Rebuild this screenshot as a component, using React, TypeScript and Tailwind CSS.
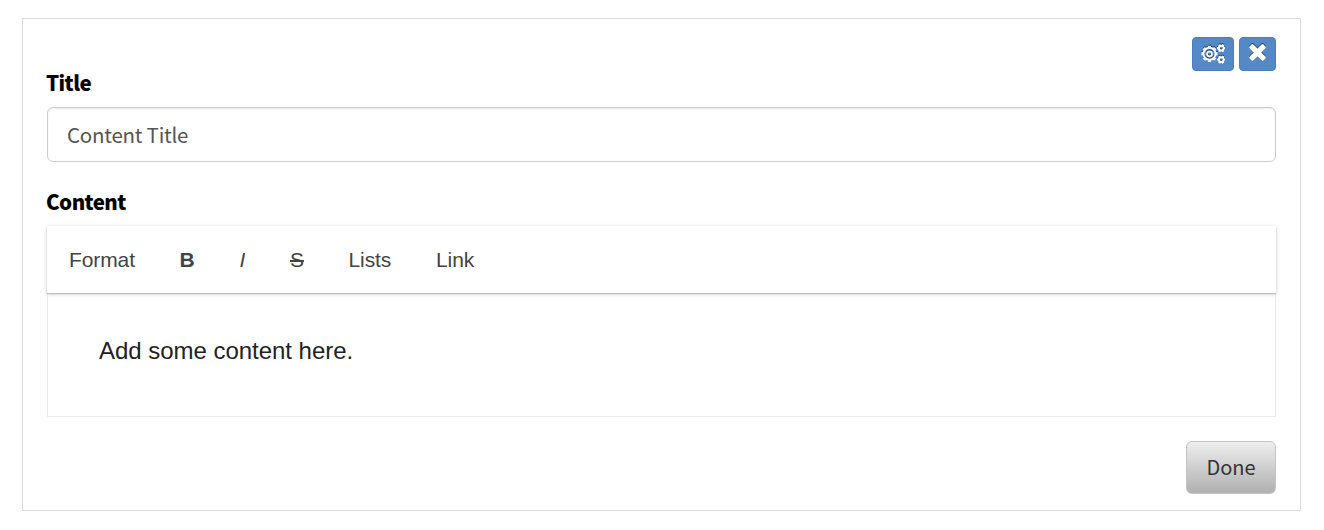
import React from "react";

type IconButtonProps = {
  label: string;
  className: string;
  children: React.ReactNode;
};

const CogsIcon = () => (
  <svg
    viewBox="0 0 24 22"
    fill="none"
    stroke="white"
    className="w-6 h-[22px] drop-shadow-[0_-1px_0_#1d3e63]"
  >
    {/* large gear */}
    <circle cx="8.5" cy="10.8" r="6" strokeWidth="2" />
    <circle
      cx="8.5"
      cy="10.8"
      r="7.2"
      strokeWidth="1.9"
      pathLength="16"
      strokeDasharray="1.1 0.9"
      strokeDashoffset="0.55"
    />
    <circle cx="8.5" cy="10.8" r="2.5" strokeWidth="1.7" />
    {/* small gears */}
    {[5.1, 16.6].map((cy) => (
      <g key={cy}>
        <circle cx="20.2" cy={cy} r="2.4" strokeWidth="2" />
        <circle
          cx="20.2"
          cy={cy}
          r="3.5"
          strokeWidth="1.4"
          pathLength="12"
          strokeDasharray="1.1 0.9"
          strokeDashoffset="0.55"
        />
      </g>
    ))}
  </svg>
);

const CloseIcon = () => (
  <svg
    viewBox="0 0 1792 1792"
    className="w-[25px] h-[25px] mb-1.5 mr-px shrink-0 fill-white drop-shadow-[0_-1px_0_#1d3e63]"
  >
    <path d="M1490 1322q0 40-28 68l-136 136q-28 28-68 28t-68-28l-294-294-294 294q-28 28-68 28t-68-28l-136-136q-28-28-28-68t28-68l294-294-294-294q-28-28-28-68t28-68l136-136q28-28 68-28t68 28l294 294 294-294q28-28 68-28t68 28l136 136q28 28 28 68t-28 68l-294 294 294 294q28 28 28 68z" />
  </svg>
);

const IconButton: React.FC<IconButtonProps> = ({
  label,
  className,
  children,
}) => (
  <button
    type="button"
    aria-label={label}
    className={`flex items-center justify-center h-[34px] rounded border border-[#4a7ebb] bg-[#5588c7] ${className}`}
  >
    {children}
  </button>
);

const tools = [
  { label: "Format", className: "w-[110.500px]" },
  { label: "B", className: "w-[60px] font-bold" },
  { label: "I", className: "w-[50.500px] italic" },
  { label: "S", className: "w-[58.500px] line-through decoration-2" },
  { label: "Lists", className: "w-[87.500px]" },
  { label: "Link", className: "" },
];

const App: React.FC = () => (
  <div className="h-[530px] bg-white pt-[18px] pl-[22px] font-['Noto_Sans_CJK_SC',sans-serif]">
    <div className="w-[1279px] h-[493px] border border-[#dcdcdc] px-6 pt-[18px]">
      <div className="flex justify-end gap-[5px]">
        <IconButton label="Settings" className="w-[42px]">
          <CogsIcon />
        </IconButton>
        <IconButton label="Close" className="w-[37px]">
          <CloseIcon />
        </IconButton>
      </div>

      <label
        htmlFor="title"
        className="block h-6 -ml-px leading-[23px] text-[20.5px] tracking-[-0.55px] font-black text-black"
      >
        Title
      </label>
      <input
        id="title"
        defaultValue="Content Title"
        className="block mt-3 w-full h-[55px] px-[19px] pb-0.5 rounded-md border border-[#ccc] text-[20.5px] tracking-[-0.25px] text-[#555] shadow-[inset_0_1px_2px_rgba(0,0,0,0.08)]"
      />

      <div className="mt-7 h-6 -ml-px leading-[23px] text-[20.5px] tracking-[-0.55px] font-black text-black">
        Content
      </div>
      <div className="mt-3 font-['Liberation_Sans',Arial,sans-serif]">
        <div className="relative flex items-center h-[67px] pl-[22px] bg-white text-[21px] tracking-[-0.1px] text-[#444] shadow-[0_1px_4px_rgba(0,0,0,0.2),0_1px_1px_rgba(0,0,0,0.15)]">
          {tools.map((t) => (
            <button
              key={t.label}
              type="button"
              className={`text-left ${t.className}`}
            >
              {t.label}
            </button>
          ))}
        </div>
        <div className="h-[124px] border border-t-0 border-[#eaeaea] pl-[51px] pt-[42px] text-2xl tracking-[-0.03px] text-[#222]">
          Add some content here.
        </div>
      </div>

      <div className="flex justify-end mt-6">
        <button
          type="button"
          className="w-[90px] h-[53px] pb-0.5 rounded-md border border-[#c4c4c4] bg-linear-to-b from-[#eee] to-[#b0b0b0] text-xl text-[#333]"
        >
          Done
        </button>
      </div>
    </div>
  </div>
);

export default App;
